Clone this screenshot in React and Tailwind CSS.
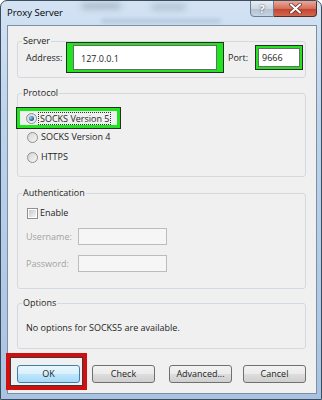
import React from "react";

const GroupBox = ({ label, className, children }) => (
  <fieldset
    className={`ml-[9px] w-[289px] rounded-[3px] border border-[#d3d9de] ${className}`}
  >
    <legend className="ml-[4px] px-[1px] text-[9px] leading-[12px] text-[#1e1e1e]">
      {label}
    </legend>
    {children}
  </fieldset>
);

const Radio = ({ checked }) => (
  <span className="flex h-[11px] w-[11px] shrink-0 items-center justify-center rounded-full border border-[#8e8f8f] bg-[linear-gradient(135deg,#d4d4d4,#f8f8f8)]">
    {checked && (
      <span className="h-[5px] w-[5px] rounded-full bg-[radial-gradient(circle_at_35%_35%,#8fd0ff,#1e5c93_70%)]" />
    )}
  </span>
);

const Button = ({ children, primary, className }) => (
  <div
    className={`flex h-[18px] w-[63px] items-center justify-center rounded-[3px] border text-[9px] text-[#1e1e1e] ${
      primary
        ? "border-[#3c7fb1] bg-[linear-gradient(to_bottom,#eaf6fd_0%,#d9f0fc_50%,#bee6fd_51%,#a7d9f5_100%)]"
        : "border-[#707070] bg-[linear-gradient(to_bottom,#f2f2f2_0%,#ebebeb_50%,#dddddd_51%,#cfcfcf_100%)]"
    } ${className}`}
  >
    {children}
  </div>
);

export default function App() {
  return (
    <div className="relative h-[400px] w-[322px] overflow-hidden whitespace-nowrap rounded-t-[7px] border border-[#3d4d5e] bg-[linear-gradient(to_bottom,#d3e3f4,#bcd3ec_30%,#a8c3e2)] font-['Open_Sans',sans-serif]">
      {/* blurred glass behind the title */}
      <div className="pointer-events-none absolute left-[80px] top-[2px] h-[6px] w-[40px] rounded-full bg-[#7f8ea0] opacity-50 blur-[3px]" />
      <div className="pointer-events-none absolute left-[150px] top-[3px] h-[6px] w-[35px] rounded-full bg-[#7f8ea0] opacity-40 blur-[3px]" />
      <div className="pointer-events-none absolute left-[100px] top-[18px] h-[4px] w-[120px] rounded-full bg-[#9db3cc] opacity-60 blur-[2px]" />

      {/* title bar */}
      <div className="relative flex h-[24px] items-start">
        <span className="ml-[6px] mt-[6px] text-[9.5px] leading-[12px] text-black">
          Proxy Server
        </span>
        <div className="-mt-px ml-auto mr-[4px] flex">
          <div className="flex h-[17px] w-[24px] items-center justify-center rounded-bl-[4px] border border-[#6d7d90] bg-[linear-gradient(to_bottom,#e9eef4,#cdd7e3_50%,#b3c1d2_51%,#c6d3e2)] text-[11px] font-bold leading-none text-white [text-shadow:0_0_2px_#333]">
            ?
          </div>
          <div className="flex h-[17px] w-[43px] items-center justify-center rounded-br-[4px] border border-l-0 border-[#5a2a25] bg-[linear-gradient(to_bottom,#e9a899,#d56f5c_50%,#c2412d_51%,#d0694f)]">
            <svg width="13" height="11" viewBox="0 0 13 11">
              <path
                d="M2 1.5 L11 9.5 M11 1.5 L2 9.5"
                stroke="#5a2a25"
                strokeWidth="3.6"
                strokeLinecap="round"
              />
              <path
                d="M2 1.5 L11 9.5 M11 1.5 L2 9.5"
                stroke="#ffffff"
                strokeWidth="2.2"
                strokeLinecap="round"
              />
            </svg>
          </div>
        </div>
      </div>

      {/* client area */}
      <div className="ml-[6px] h-[369px] w-[310px] border border-[#7d8fa3] bg-[#f0f0f0] text-[9px] leading-[12px] text-[#1e1e1e]">
        <GroupBox label="Server" className="mt-[9px]">
          <div className="-mt-[5px] mb-[4px] flex h-[31px] items-center pl-[8px]">
            <span className="w-[40px]">Address:</span>
            <div className="flex h-[31px] w-[158px] border border-[#2b2b2b] bg-[#1ee51e] px-[6px] py-[2px]">
              <div className="flex flex-1 items-center border border-[#6b6b6b] bg-white pl-[7px] pt-[2px]">
                127.0.0.1
              </div>
            </div>
            <span className="ml-[4px] w-[27px]">Port:</span>
            <div className="h-[25px] w-[48px] border border-[#2b2b2b] bg-[#1ee51e] p-[2px]">
              <div className="flex h-full items-center border border-[#6b6b6b] bg-white pl-[3px]">
                9666
              </div>
            </div>
          </div>
        </GroupBox>

        <GroupBox label="Protocol" className="mt-[9px]">
          <div className="-ml-[2px] mt-[8px] flex h-[22px] w-[105px] items-center border border-[#2b2b2b] bg-[#1ee51e] p-[3px]">
            <div className="flex h-full w-full items-center bg-[#f0f0f0] pl-[6px]">
              <Radio checked />
              <span className="ml-[1px] border border-dotted border-[#333] px-[1px] leading-[11px]">
                SOCKS Version 5
              </span>
            </div>
          </div>
          <div className="flex h-[16px] items-center pl-[9px]">
            <Radio />
            <span className="ml-[2px] px-[1px]">SOCKS Version 4</span>
          </div>
          <div className="mb-[11px] mt-[4px] flex h-[16px] items-center pl-[9px]">
            <Radio />
            <span className="ml-[2px] px-[1px]">HTTPS</span>
          </div>
        </GroupBox>

        <GroupBox label="Authentication" className="mt-[10px]">
          <div className="mt-[7px] flex h-[14px] items-center pl-[9px]">
            <span className="flex h-[11px] w-[11px] items-center justify-center border border-[#8e8f8f] bg-white">
              <span className="h-[7px] w-[7px] bg-[linear-gradient(135deg,#c9c9c9,#f4f4f4)]" />
            </span>
            <span className="ml-[2px]">Enable</span>
          </div>
          <div className="mt-[8px] flex h-[17px] items-center pl-[8px]">
            <span className="w-[52px] text-[#a3a3a3]">Username:</span>
            <div className="h-[17px] w-[89px] border border-[#bcbcbc] bg-[#f6f6f6]" />
          </div>
          <div className="mb-[16px] mt-[10px] flex h-[17px] items-center pl-[8px]">
            <span className="w-[52px] text-[#a3a3a3]">Password:</span>
            <div className="h-[17px] w-[89px] border border-[#bcbcbc] bg-[#f6f6f6]" />
          </div>
        </GroupBox>

        <GroupBox label="Options" className="mt-[8px]">
          <div className="mb-[14px] mt-[13px] pl-[8px]">
            No options for SOCKS5 are available.
          </div>
        </GroupBox>

        <div className="mt-[4px] flex items-start">
          <div className="-ml-[2px] h-[37px] w-[81px] border-[4px] border-[#d10f0f] pl-[7px] pt-[8px] shadow-[inset_0_0_0_1px_#3a3a3a]">
            <Button primary>OK</Button>
          </div>
          <Button className="ml-[5px] mt-[12px]">Check</Button>
          <Button className="ml-[14px] mt-[12px]">Advanced...</Button>
          <Button className="ml-[11px] mt-[12px]">Cancel</Button>
        </div>
      </div>
    </div>
  );
}
